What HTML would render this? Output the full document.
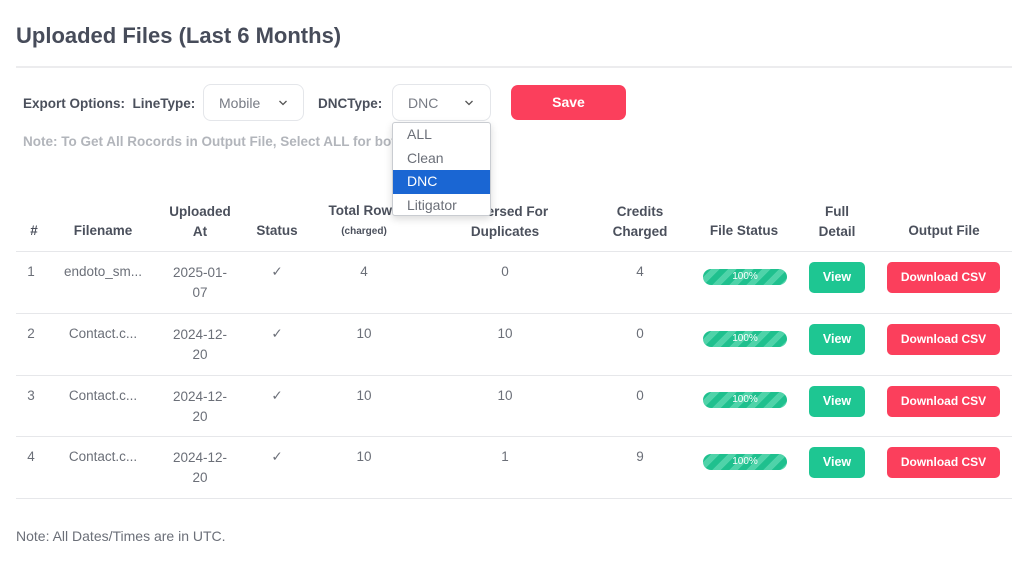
<!DOCTYPE html>
<html><head><meta charset="utf-8"><style>
*{margin:0;padding:0;box-sizing:border-box}
body{width:1024px;height:571px;background:#fff;font-family:"Liberation Sans",sans-serif;position:relative;overflow:hidden;color:#666b74}
.a{position:absolute;white-space:nowrap}
.c{position:absolute;white-space:nowrap;transform:translateX(-50%);text-align:center}
.h{color:#4b505c;font-weight:bold;font-size:13.5px}
.r{font-size:13.5px;color:#6b6f78}
.line{position:absolute;left:16px;width:996px;height:1px;background:#e6e7ea}
.bar{position:absolute;left:703px;width:84px;height:16px;border-radius:8px;background:repeating-linear-gradient(135deg,#1fc08e 0 6px,#4fd3a9 6px 12px);color:#fff;font-size:10px;text-align:center;line-height:16px}
.view{position:absolute;left:809px;width:56px;height:31px;border-radius:5px;background:#1ec692;color:#fff;font-size:12.5px;font-weight:bold;text-align:center;line-height:31px}
.dl{position:absolute;left:887px;width:113px;height:31px;border-radius:5px;background:#fb3f5c;color:#fff;font-size:12px;font-weight:bold;text-align:center;line-height:31px}
.sel{position:absolute;border:1px solid #e4e6ea;border-radius:8px;background:#fff;font-size:14px;color:#777b84}
</style></head><body>
<div class="a" style="left:16px;top:23px;font-size:22px;font-weight:bold;color:#474c5a">Uploaded Files (Last 6 Months)</div>
<div class="line" style="top:66px;height:2px;background:#ececee"></div>

<div class="a h" style="left:23px;top:96px">Export Options:&nbsp; LineType:</div>
<div class="sel" style="left:203px;top:84px;width:101px;height:37px"><span class="a" style="left:15px;top:10px">Mobile</span><svg class="a" style="left:74px;top:14px" width="10" height="8" viewBox="0 0 10 8"><path d="M1.5 2 L5 5.5 L8.5 2" stroke="#555" stroke-width="1.3" fill="none"/></svg></div>
<div class="a h" style="left:318px;top:96px">DNCType:</div>
<div class="sel" style="left:392px;top:84px;width:99px;height:37px"><span class="a" style="left:15px;top:10px">DNC</span><svg class="a" style="left:71px;top:14px" width="10" height="8" viewBox="0 0 10 8"><path d="M1.5 2 L5 5.5 L8.5 2" stroke="#555" stroke-width="1.3" fill="none"/></svg></div>
<div class="a" style="left:511px;top:85px;width:115px;height:35px;border-radius:7px;background:#fb3f5c;color:#fff;font-weight:bold;font-size:14px;text-align:center;line-height:35px">Save</div>
<div class="a" style="left:23px;top:134px;font-size:13.5px;font-weight:bold;color:#b2b5bb">Note: To Get All Rocords in Output File, Select ALL for both</div>

<div class="a" style="left:392px;top:122px;width:99px;height:94px;background:#fff;border:1px solid #c9ccd1;border-radius:3px;box-shadow:0 3px 8px rgba(0,0,0,.15);font-size:14px;color:#6b6f78;z-index:5">
<div style="height:23.5px;line-height:23px;padding-left:14px">ALL</div>
<div style="height:23.5px;line-height:23px;padding-left:14px">Clean</div>
<div style="height:23.5px;line-height:23px;padding-left:14px;background:#1a66d3;color:#fff">DNC</div>
<div style="height:23.5px;line-height:23px;padding-left:14px">Litigator</div>
</div>

<div class="c h" style="left:34px;top:223px">#</div>
<div class="c h" style="left:103px;top:223px">Filename</div>
<div class="c h" style="left:200px;top:202px;line-height:20px">Uploaded<br>At</div>
<div class="c h" style="left:277px;top:223px">Status</div>
<div class="c h" style="left:364px;top:203px">Total Rows</div>
<div class="c" style="left:364px;top:226px;font-size:10px;color:#4b505c;font-weight:bold">(charged)</div>
<div class="c h" style="left:505px;top:202px;line-height:20px">Reversed For<br>Duplicates</div>
<div class="c h" style="left:640px;top:202px;line-height:20px">Credits<br>Charged</div>
<div class="c h" style="left:744px;top:223px">File Status</div>
<div class="c h" style="left:837px;top:202px;line-height:20px">Full<br>Detail</div>
<div class="c h" style="left:944px;top:223px">Output File</div>

<div class="line" style="top:251px"></div>
<div class="line" style="top:313px"></div>
<div class="line" style="top:375px"></div>
<div class="line" style="top:436px"></div>
<div class="line" style="top:498px"></div>

<div class="c r" style="left:31px;top:264px">1</div><div class="c r" style="left:103px;top:264px">endoto_sm...</div><div class="c r" style="left:200px;top:263px;line-height:20px">2025-01-<br>07</div><div class="c r" style="left:277px;top:264px">✓</div><div class="c r" style="left:364px;top:264px">4</div><div class="c r" style="left:505px;top:264px">0</div><div class="c r" style="left:640px;top:264px">4</div>
<div class="bar" style="top:269px">100%</div><div class="view" style="top:262px">View</div><div class="dl" style="top:262px">Download CSV</div>

<div class="c r" style="left:31px;top:326px">2</div><div class="c r" style="left:103px;top:326px">Contact.c...</div><div class="c r" style="left:200px;top:325px;line-height:20px">2024-12-<br>20</div><div class="c r" style="left:277px;top:326px">✓</div><div class="c r" style="left:364px;top:326px">10</div><div class="c r" style="left:505px;top:326px">10</div><div class="c r" style="left:640px;top:326px">0</div>
<div class="bar" style="top:331px">100%</div><div class="view" style="top:324px">View</div><div class="dl" style="top:324px">Download CSV</div>

<div class="c r" style="left:31px;top:388px">3</div><div class="c r" style="left:103px;top:388px">Contact.c...</div><div class="c r" style="left:200px;top:387px;line-height:20px">2024-12-<br>20</div><div class="c r" style="left:277px;top:388px">✓</div><div class="c r" style="left:364px;top:388px">10</div><div class="c r" style="left:505px;top:388px">10</div><div class="c r" style="left:640px;top:388px">0</div>
<div class="bar" style="top:392px">100%</div><div class="view" style="top:386px">View</div><div class="dl" style="top:386px">Download CSV</div>

<div class="c r" style="left:31px;top:449px">4</div><div class="c r" style="left:103px;top:449px">Contact.c...</div><div class="c r" style="left:200px;top:448px;line-height:20px">2024-12-<br>20</div><div class="c r" style="left:277px;top:449px">✓</div><div class="c r" style="left:364px;top:449px">10</div><div class="c r" style="left:505px;top:449px">1</div><div class="c r" style="left:640px;top:449px">9</div>
<div class="bar" style="top:454px">100%</div><div class="view" style="top:447px">View</div><div class="dl" style="top:447px">Download CSV</div>

<div class="a" style="left:16px;top:528px;font-size:14px;color:#6b6f78">Note: All Dates/Times are in UTC.</div>
</body></html>
